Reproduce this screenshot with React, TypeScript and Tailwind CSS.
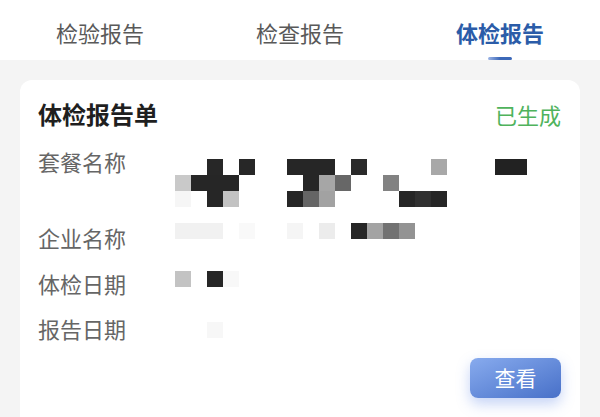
import React from 'react';

const font = { fontFamily: '"Noto Sans CJK SC", "Noto Sans", sans-serif' };

type Block = [number, number, string, number?];

// mosaic cells: [col, row, colour, span]
const packageBlocks: Block[] = [
  [2, 0, '#272727'], [4, 0, '#272727'], [7, 0, '#262626', 3], [11, 0, '#2a2a2a'],
  [16, 0, '#a8a8a8'], [20, 0, '#222222', 2],
  [0, 1, '#c9c9c9'], [1, 1, '#262626', 3], [8, 1, '#262626'], [9, 1, '#a6a6a6'],
  [10, 1, '#676767'], [13, 1, '#828282'],
  [0, 2, '#f6f6f6'], [2, 2, '#262626'], [3, 2, '#c2c2c2'], [7, 2, '#262626'],
  [8, 2, '#656565'], [9, 2, '#a2a2a2'], [14, 2, '#262626'], [15, 2, '#303030'], [16, 2, '#262626'],
];

const companyBlocks: Block[] = [
  [0, 0, '#f1f1f1', 3], [4, 0, '#f9f9f9'], [7, 0, '#f5f5f5'], [9, 0, '#ececec'],
  [11, 0, '#262626'], [12, 0, '#a3a3a3'], [13, 0, '#727272'], [14, 0, '#939393'],
];

const examBlocks: Block[] = [[0, 0, '#c3c3c3'], [2, 0, '#262626'], [3, 0, '#f8f8f8']];

const reportBlocks: Block[] = [[2, 0, '#f7f7f7']];

function Mosaic({ blocks, rows, cols = 22 }: { blocks: Block[]; rows: number; cols?: number }) {
  return (
    <svg width={cols * 16} height={rows * 16} className="block">
      {blocks.map(([c, r, fill, span = 1], i) => (
        <rect key={i} x={c * 16} y={r * 16} width={span * 16} height={16} fill={fill} />
      ))}
    </svg>
  );
}

const tabs = ['检验报告', '检查报告', '体检报告'];

export default function App() {
  return (
    <div className="h-[417px] overflow-hidden bg-[#f4f4f4]" style={font}>
      {/* Tabs */}
      <div className="flex h-[60px] bg-white">
        {tabs.map((t, i) => {
          const active = i === 2;
          return (
            <div key={t} className="flex flex-1 flex-col items-center pt-[17px]">
              <span
                className={`text-[22px] leading-[30px] ${active ? 'font-semibold text-[#2b5ca8]' : 'text-[#595959]'}`}
              >
                {t}
              </span>
              {active && (
                <div className="mt-auto h-[3px] w-[24px] rounded-full bg-gradient-to-r from-[#9db5e6] via-[#3c68b8] to-[#3c68b8]" />
              )}
            </div>
          );
        })}
      </div>

      {/* Card */}
      <div className="mx-[20px] mt-[20px] flex flex-col rounded-[12px] bg-white pb-[40px] pl-[18px] pr-[19px] pt-[17px]">
        <div className="flex items-center justify-between">
          <span className="text-[24px] font-bold leading-[34px] text-[#1f1f1f]">体检报告单</span>
          <span className="text-[22px] leading-[34px] text-[#4fb35c]">已生成</span>
        </div>

        <div className="mt-[15px] flex">
          <span className="w-[137px] shrink-0 text-[22px] leading-[30px] text-[#666]">套餐名称</span>
          <div className="mt-[13px]">
            <Mosaic blocks={packageBlocks} rows={3} />
          </div>
        </div>

        <div className="mt-[15px] flex">
          <span className="w-[137px] shrink-0 text-[22px] leading-[30px] text-[#666]">企业名称</span>
          <div className="mt-[1px]">
            <Mosaic blocks={companyBlocks} rows={1} />
          </div>
        </div>

        <div className="mt-[16px] flex">
          <span className="w-[137px] shrink-0 text-[22px] leading-[30px] text-[#666]">体检日期</span>
          <div className="mt-[3px]">
            <Mosaic blocks={examBlocks} rows={1} />
          </div>
        </div>

        <div className="mt-[15px] flex">
          <span className="w-[137px] shrink-0 text-[22px] leading-[30px] text-[#666]">报告日期</span>
          <div className="mt-[9px]">
            <Mosaic blocks={reportBlocks} rows={1} />
          </div>
        </div>

        <button className="mt-[15px] h-[40px] w-[91px] self-end rounded-[8px] bg-gradient-to-br from-[#88abee] to-[#4870c8] text-[21px] text-white shadow-[0_6px_14px_rgba(90,130,230,0.35)]">
          查看
        </button>
      </div>
    </div>
  );
}
